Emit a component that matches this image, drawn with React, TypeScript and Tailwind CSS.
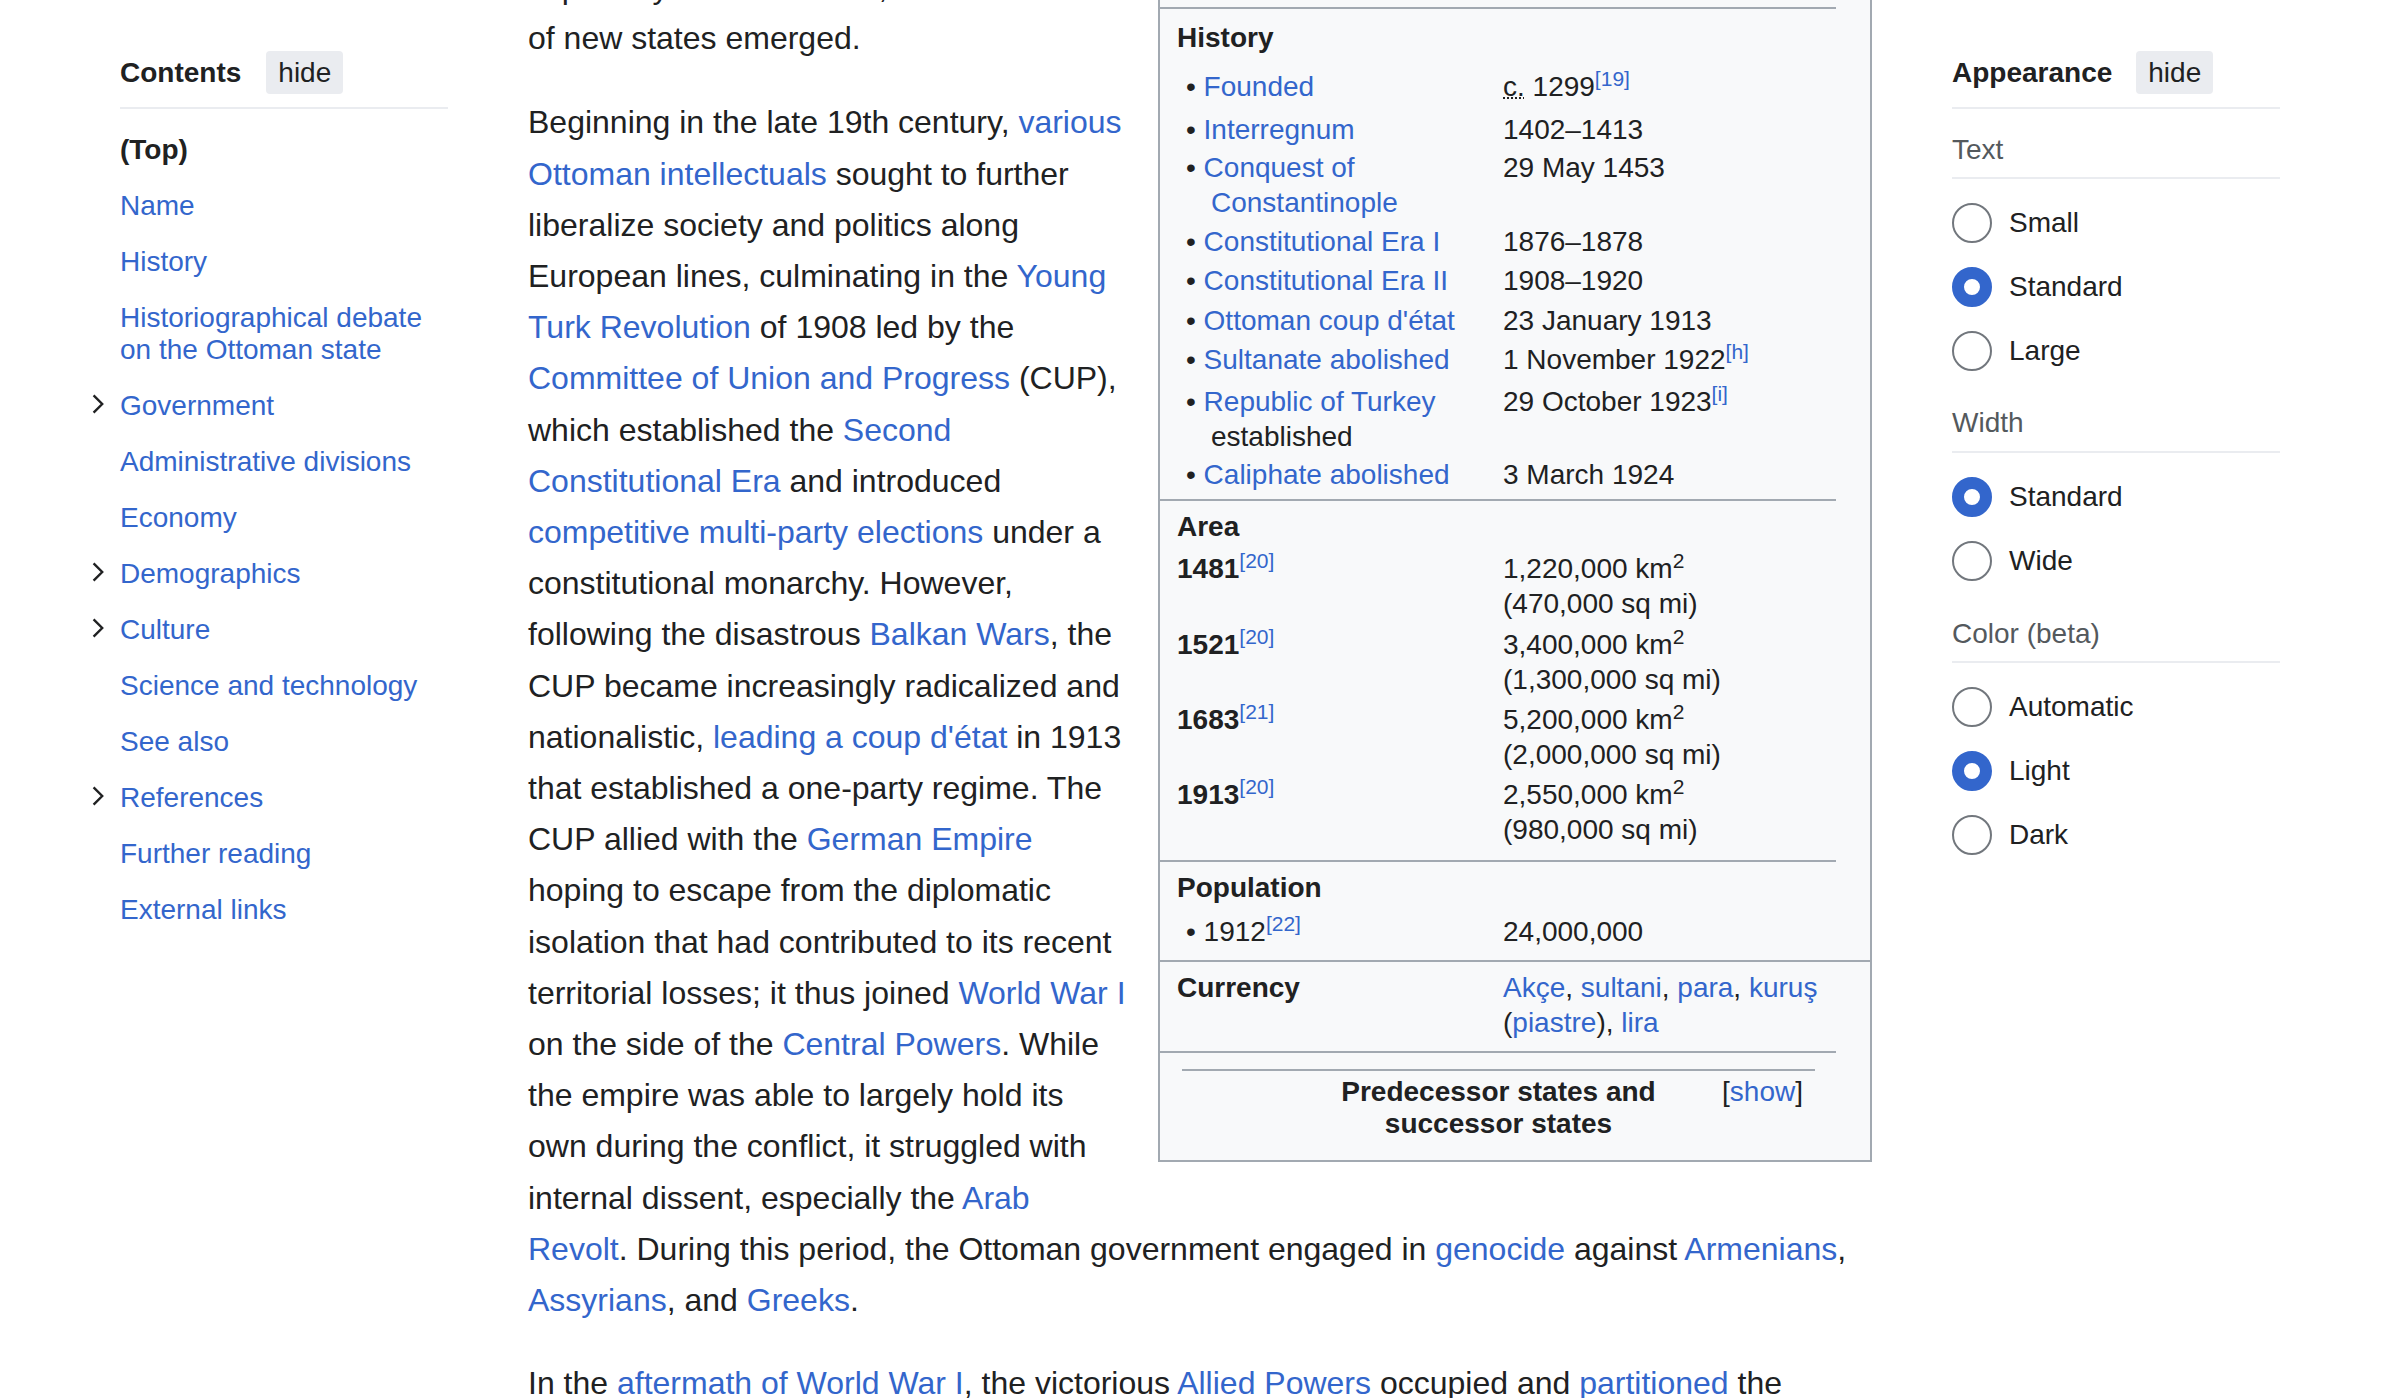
import React from "react";

const A = ({ children }: { children: React.ReactNode }) => (
  <a className="text-[#3366cc]">{children}</a>
);

function Chevron() {
  return (
    <svg width="12" height="20" viewBox="0 0 12 20" fill="none">
      <path d="M1.6 1.4 L10.2 10 L1.6 18.6" stroke="#202122" strokeWidth="2.4" strokeLinejoin="miter" />
    </svg>
  );
}

const tocItems: { t: string; bold?: boolean; c?: boolean }[] = [
  { t: "(Top)", bold: true },
  { t: "Name" },
  { t: "History" },
  { t: "Historiographical debate on the Ottoman state" },
  { t: "Government", c: true },
  { t: "Administrative divisions" },
  { t: "Economy" },
  { t: "Demographics", c: true },
  { t: "Culture", c: true },
  { t: "Science and technology" },
  { t: "See also" },
  { t: "References", c: true },
  { t: "Further reading" },
  { t: "External links" },
];

function HideButton() {
  return (
    <span className="flex h-[43px] items-center rounded-[4px] bg-[#eaecf0] px-[12px] text-[28px] text-[#202122]">
      hide
    </span>
  );
}

function LeftSidebar() {
  return (
    <div className="w-[328px] shrink-0 pt-[51px] text-[28px] text-[#202122]">
      <div className="flex h-[43px] items-center">
        <span className="font-bold">Contents</span>
        <span className="ml-[25px]">
          <HideButton />
        </span>
      </div>
      <div className="mt-[13px] border-t-2 border-[#eaecf0]" />
      <ul className="mt-[13px]">
        {tocItems.map((it) => (
          <li key={it.t} className="-ml-[32px] flex">
            <span className="flex w-[32px] shrink-0 pl-[4px] pt-[16px]">{it.c && <Chevron />}</span>
            <span
              className={
                it.bold
                  ? "py-[12px] leading-[32px] font-bold text-[#202122]"
                  : "py-[12px] leading-[32px] text-[#3366cc]"
              }
            >
              {it.t}
            </span>
          </li>
        ))}
      </ul>
    </div>
  );
}

function Radio({ label, checked }: { label: string; checked?: boolean }) {
  return (
    <div className="flex h-[40px] items-center">
      <span
        className={
          checked
            ? "h-[40px] w-[40px] shrink-0 rounded-full border-[12px] border-[#3366cc] bg-white"
            : "h-[40px] w-[40px] shrink-0 rounded-full border-2 border-[#72777d] bg-white"
        }
      />
      <span className="ml-[17px] text-[28px] leading-[32px] text-[#202122]">{label}</span>
    </div>
  );
}

function RightSidebar() {
  return (
    <div className="ml-[80px] w-[328px] shrink-0 pt-[51px] text-[28px] text-[#202122]">
      <div className="flex h-[43px] items-center">
        <span className="font-bold">Appearance</span>
        <span className="ml-[24px]">
          <HideButton />
        </span>
      </div>
      <div className="mt-[13px] border-t-2 border-[#eaecf0]" />

      <div className="mt-[25px] border-b-2 border-[#eaecf0] pb-[11px] leading-[32px] text-[#54595d]">Text</div>
      <div className="mt-[24px] flex flex-col gap-[24px]">
        <Radio label="Small" />
        <Radio label="Standard" checked />
        <Radio label="Large" />
      </div>

      <div className="mt-[36px] border-b-2 border-[#eaecf0] pb-[12px] leading-[32px] text-[#54595d]">Width</div>
      <div className="mt-[24px] flex flex-col gap-[24px]">
        <Radio label="Standard" checked />
        <Radio label="Wide" />
      </div>

      <div className="mt-[37px] border-b-2 border-[#eaecf0] pb-[11px] leading-[32px] text-[#54595d]">Color (beta)</div>
      <div className="mt-[24px] flex flex-col gap-[24px]">
        <Radio label="Automatic" />
        <Radio label="Light" checked />
        <Radio label="Dark" />
      </div>
    </div>
  );
}

function Row({
  cls,
  label,
  children,
  bullet = true,
}: {
  cls: string;
  label: React.ReactNode;
  children?: React.ReactNode;
  bullet?: boolean;
}) {
  return (
    <div className={`flex pl-[17px] ${cls}`}>
      <div className={bullet ? "w-[326px] shrink-0 pl-[34px] indent-[-25px]" : "w-[326px] shrink-0"}>
        {bullet && <>{"\u2022\u00a0"}</>}
        {label}
      </div>
      <div className="w-[330px]">{children}</div>
    </div>
  );
}

const Ref = ({ t }: { t: string }) => (
  <sup className="font-normal">
    <A>[{t}]</A>
  </sup>
);

function Infobox() {
  const line = "w-[676px] border-t-2 border-[#a2a9b1]";
  return (
    <div className="float-right mb-[16px] ml-[28px] w-[714px] border-x-2 border-b-2 border-[#a2a9b1] bg-[#f8f9fa] pb-[20px] text-[28px] leading-[35px] text-[#202122]">
      <div className="h-[45px]" />
      <div className={line} />
      <div className="mt-[11px] pl-[17px] font-bold">History</div>
      <Row cls="mt-[14px]" label={<A>Founded</A>}>
        <abbr title="circa" className="underline decoration-dotted decoration-2">
          c.
        </abbr>{" "}
        1299
        <Ref t="19" />
      </Row>
      <Row cls="mt-[8px]" label={<A>Interregnum</A>}>
        1402–1413
      </Row>
      <Row cls="mt-[3px]" label={<A>Conquest of Constantinople</A>}>
        29 May 1453
      </Row>
      <Row cls="mt-[4px]" label={<A>Constitutional Era I</A>}>
        1876–1878
      </Row>
      <Row cls="mt-[4px]" label={<A>Constitutional Era II</A>}>
        1908–1920
      </Row>
      <Row cls="mt-[5px]" label={<A>Ottoman coup d'état</A>}>
        23 January 1913
      </Row>
      <Row cls="mt-[4px]" label={<A>Sultanate abolished</A>}>
        1 November 1922
        <Ref t="h" />
      </Row>
      <Row
        cls="mt-[7px]"
        label={
          <>
            <A>Republic of Turkey</A> established
          </>
        }
      >
        29 October 1923
        <Ref t="i" />
      </Row>
      <Row cls="mt-[3px]" label={<A>Caliphate abolished</A>}>
        3 March 1924
      </Row>
      <div className={`mt-[7px] ${line}`} />

      <div className="mt-[8px] pl-[17px] font-bold">Area</div>
      <Row
        cls="mt-[7px]"
        bullet={false}
        label={
          <>
            <span className="font-bold">1481</span>
            <Ref t="20" />
          </>
        }
      >
        1,220,000&nbsp;km<sup>2</sup>
        <br />
        (470,000&nbsp;sq&nbsp;mi)
      </Row>
      <Row
        cls="mt-[6px]"
        bullet={false}
        label={
          <>
            <span className="font-bold">1521</span>
            <Ref t="20" />
          </>
        }
      >
        3,400,000&nbsp;km<sup>2</sup>
        <br />
        (1,300,000&nbsp;sq&nbsp;mi)
      </Row>
      <Row
        cls="mt-[5px]"
        bullet={false}
        label={
          <>
            <span className="font-bold">1683</span>
            <Ref t="21" />
          </>
        }
      >
        5,200,000&nbsp;km<sup>2</sup>
        <br />
        (2,000,000&nbsp;sq&nbsp;mi)
      </Row>
      <Row
        cls="mt-[5px]"
        bullet={false}
        label={
          <>
            <span className="font-bold">1913</span>
            <Ref t="20" />
          </>
        }
      >
        2,550,000&nbsp;km<sup>2</sup>
        <br />
        (980,000&nbsp;sq&nbsp;mi)
      </Row>
      <div className={`mt-[13px] ${line}`} />

      <div className="mt-[8px] pl-[17px] font-bold">Population</div>
      <Row
        cls="mt-[9px]"
        label={
          <>
            1912
            <Ref t="22" />
          </>
        }
      >
        24,000,000
      </Row>
      <div className="mt-[11px] border-t-2 border-[#a2a9b1]" />

      <Row cls="mt-[8px]" bullet={false} label={<span className="font-bold">Currency</span>}>
        <A>Akçe</A>, <A>sultani</A>, <A>para</A>, <A>kuruş</A>
        <br />(<A>piastre</A>), <A>lira</A>
      </Row>
      <div className={`mt-[11px] ${line}`} />

      <div className="ml-[22px] mt-[16px] w-[633px] border-t-2 border-[#a2a9b1]">
        <div className="mt-[5px] grid grid-cols-[96px_1fr_96px] leading-[32px]">
          <div />
          <div className="text-center font-bold">Predecessor states and successor states</div>
          <div className="whitespace-nowrap pr-[12px] text-right">
            [<A>show</A>]
          </div>
        </div>
      </div>
    </div>
  );
}

function Article() {
  return (
    <div className="-mt-[38px] ml-[80px] w-[1344px] shrink-0 text-[32px] leading-[51.2px] text-[#202122]">
      <Infobox />
      <p className="mb-[33px]">especially in the Balkans, where a number of new states emerged.</p>
      <p className="mb-[32px]">
        Beginning in the late 19th century, <A>various Ottoman intellectuals</A> sought to further liberalize
        society and politics along European lines, culminating in the <A>Young Turk Revolution</A> of 1908 led
        by the <A>Committee of Union and Progress</A> (CUP), which established the{" "}
        <A>Second Constitutional Era</A> and introduced <A>competitive multi-party elections</A> under a
        constitutional monarchy. However, following the disastrous <A>Balkan Wars</A>, the CUP became
        increasingly radicalized and nationalistic, <A>leading a coup d'état</A> in 1913 that established a
        one-party regime. The CUP allied with the <A>German Empire</A> hoping to escape from the diplomatic
        isolation that had contributed to its recent territorial losses; it thus joined <A>World War I</A> on
        the side of the <A>Central Powers</A>. While the empire was able to largely hold its own during the
        conflict, it struggled with internal dissent, especially the <A>Arab Revolt</A>. During this period,
        the Ottoman government engaged in <A>genocide</A> against <A>Armenians</A>, <A>Assyrians</A>, and{" "}
        <A>Greeks</A>.
      </p>
      <p className="mb-[32px]">
        In the <A>aftermath of World War I</A>, the victorious <A>Allied Powers</A> occupied and{" "}
        <A>partitioned</A> the Ottoman Empire's territories, and the Turkish War of Independence followed.
      </p>
    </div>
  );
}

export default function App() {
  return (
    <div className="h-[1398px] w-[2400px] overflow-hidden bg-white font-['Liberation_Sans',Arial,sans-serif] text-[#202122]">
      <div className="flex items-start pl-[120px]">
        <LeftSidebar />
        <Article />
        <RightSidebar />
      </div>
    </div>
  );
}
